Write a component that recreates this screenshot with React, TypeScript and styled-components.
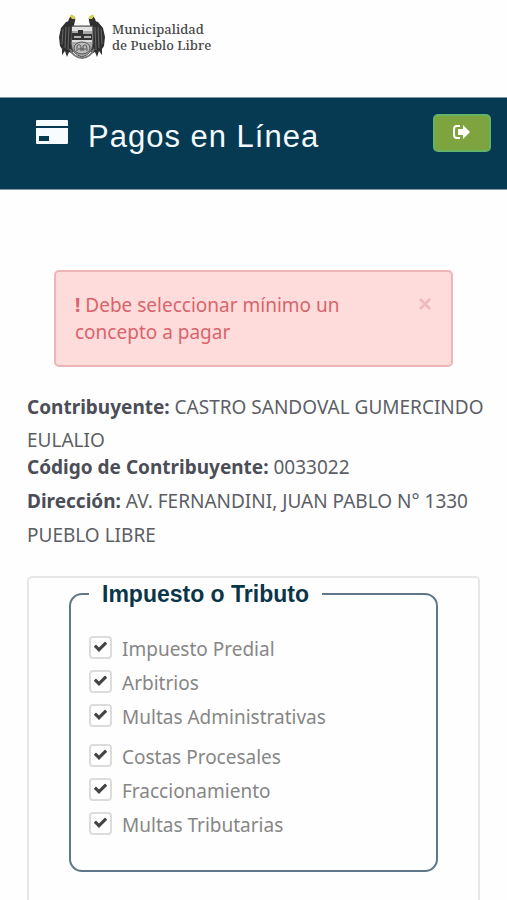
import React from "react";
import styled, { createGlobalStyle } from "styled-components";

const GlobalStyle = createGlobalStyle`
  * { box-sizing: border-box; }
  body {
    margin: 0;
    background: #fefefe;
    font-family: "Noto Sans", sans-serif;
    font-size: 19px;
    color: #5c5e66;
  }
  p, h1 { margin: 0; }
`;

const Masthead = styled.header`
  display: flex;
  align-items: flex-start;
  gap: 6px;
  height: 97px;
  padding: 12px 58px;
`;

const Crest = styled.svg`
  width: 48px;
  height: 48px;
  flex: none;
`;

const BrandName = styled.p`
  padding-top: 9px;
  font-family: "Noto Serif", "Liberation Serif", serif;
  font-size: 13px;
  font-weight: 500;
  line-height: 16px;
  color: #484848;
`;

const TitleBar = styled.div`
  display: flex;
  align-items: flex-start;
  height: 93px;
  padding: 16px 16px 0 36px;
  background: #063a52;
  border-top: 1px solid #8599a3;
  border-bottom: 1px solid #8599a3;
`;

const CardIcon = styled.svg`
  width: 32px;
  height: 24px;
  margin-top: 6px;
  flex: none;
`;

const Title = styled.h1`
  flex: 1;
  margin-left: 20px;
  font-family: "Liberation Sans", sans-serif;
  font-size: 31px;
  font-weight: 400;
  line-height: 46px;
  letter-spacing: 1px;
  color: #f4fbff;
`;

const ExitButton = styled.button`
  display: flex;
  align-items: center;
  justify-content: center;
  width: 58px;
  height: 38px;
  padding: 0 0 2px;
  border: 2px solid #65b267;
  border-radius: 5px;
  background: #7ea43f;
`;

const Alert = styled.div`
  display: flex;
  align-items: flex-start;
  justify-content: space-between;
  margin: 80px 54px 0;
  padding: 20px 20px 19px 19px;
  border: 2px solid #edb5b8;
  border-radius: 5px;
  background: #fddcdb;
  color: #d9646b;
  line-height: 27px;
`;

const AlertText = styled.p`
  max-width: 280px;
`;

const CloseButton = styled.button`
  display: flex;
  padding: 6px 0;
  border: 0;
  background: none;
`;

const Details = styled.section`
  padding: 24px 20px 0 27px;
`;

const Detail = styled.p<{ $tight?: boolean }>`
  line-height: ${(p) => (p.$tight ? 33 : 34)}px;
  margin-bottom: ${(p) => (p.$tight ? -7 : 0)}px;

  strong {
    color: #4b4d57;
  }
`;

const Panel = styled.form`
  margin: 24px 27px 0;
  padding: 2px 40px 60px;
  border: 2px solid #e6e6e8;
  border-radius: 5px;
`;

const TaxSet = styled.fieldset`
  margin: 0;
  min-width: 0;
  padding: 28px 18px 24px;
  border: 2px solid #5f7787;
  border-radius: 13px;
`;

const Legend = styled.legend`
  padding: 0 13px;
  font-family: "Liberation Sans", sans-serif;
  font-size: 23px;
  font-weight: 700;
  line-height: 28px;
  color: #0b3549;
`;

const Group = styled.div`
  & + & {
    margin-top: 6px;
  }
`;

const Option = styled.label`
  display: grid;
  grid-template-columns: 23px 1fr;
  column-gap: 10px;
  align-items: start;
  height: 34px;
  line-height: 27px;
  color: #868686;
`;

const Box = styled.input`
  grid-area: 1 / 1;
  appearance: none;
  width: 23px;
  height: 23px;
  margin: 0;
  border: 2px solid #dcdcdc;
  border-radius: 4px;
  background: #fff;

  &:not(:checked) + svg {
    visibility: hidden;
  }
`;

const Tick = styled.svg`
  grid-area: 1 / 1;
  width: 15px;
  height: 15px;
  margin: 3px 4px;
  pointer-events: none;
`;

const groups = [
  ["Impuesto Predial", "Arbitrios", "Multas Administrativas"],
  ["Costas Procesales", "Fraccionamiento", "Multas Tributarias"],
];

function Eagle() {
  return (
    <>
      <path d="M11 9 8 10 3 16 1 25 2 34 4 37 4 43 7 39 9 45 11 40 15 42 14 18 16 12Z" fill="#303030" />
      <path d="M5 17 4 32M8 15 7 36M11 15 10 38" stroke="#777" strokeWidth=".8" fill="none" />
      <path d="M10 10Q11 4 15 4Q18 5 17 9L15 17Z" fill="#303030" />
      <path d="M12 4Q13 1 16 4L18 7 14 7Z" fill="#d6cf4d" />
    </>
  );
}

export default function App() {
  return (
    <>
      <GlobalStyle />
      <Masthead>
        <Crest viewBox="0 0 48 48" aria-hidden="true">
          <Eagle />
          <g transform="translate(48 0) scale(-1 1)">
            <Eagle />
          </g>
          <path d="M14 14H35V32Q34 42 24 45Q14 42 13 32Z" fill="#aaa" stroke="#4a4a4a" />
          <path d="M14 15H34V19H14Z" fill="#e3e3e3" />
          <path d="M14 21H20V18H25V22H34V28H14Z" fill="#333" />
          <path d="M16 25H23M26 25H33" stroke="#ddd" strokeWidth="1.5" />
          <path d="M14 29H34" stroke="#eee" strokeWidth="1.5" />
          <ellipse cx="24" cy="36" rx="8" ry="6" fill="#bbb" stroke="#555" />
          <path d="M19 39V34Q22 31 23 35V39M25 39V34Q28 31 29 36V39M20 37H28" stroke="#555" fill="none" />
          <path d="M12 37Q15 45 24 46Q33 45 36 37" stroke="#777" strokeWidth="2" fill="none" />
        </Crest>
        <BrandName>
          Municipalidad
          <br />
          de Pueblo Libre
        </BrandName>
      </Masthead>

      <TitleBar>
        <CardIcon viewBox="0 0 32 24" aria-hidden="true">
          <path d="M1 0H31Q32 0 32 1V6H0V1Q0 0 1 0Z" fill="#f6fcff" />
          <path fillRule="evenodd" d="M0 8H32V23Q32 24 31 24H1Q0 24 0 23ZM3 16V21H13V16Z" fill="#f6fcff" />
        </CardIcon>
        <Title>Pagos en Línea</Title>
        <ExitButton type="button" aria-label="Salir">
          <svg width="18" height="16" viewBox="0 0 18 16" aria-hidden="true">
            <path d="M7 2H4Q1 2 1 5V11Q1 14 4 14H7" fill="none" stroke="#fff" strokeWidth="2" />
            <path d="M5 5H10V1L17 8 10 15V11H5Z" fill="#fff" />
          </svg>
        </ExitButton>
      </TitleBar>

      <main>
        <Alert role="alert">
          <AlertText>
            <strong>!</strong> Debe seleccionar mínimo un concepto a pagar
          </AlertText>
          <CloseButton type="button" aria-label="Cerrar">
            <svg width="12" height="12" viewBox="0 0 12 12" aria-hidden="true">
              <path d="M1 1 11 11M11 1 1 11" stroke="#eeb9bc" strokeWidth="2.5" />
            </svg>
          </CloseButton>
        </Alert>

        <Details>
          <Detail $tight>
            <strong>Contribuyente:</strong> CASTRO SANDOVAL GUMERCINDO EULALIO
          </Detail>
          <Detail>
            <strong>Código de Contribuyente:</strong> 0033022
          </Detail>
          <Detail>
            <strong>Dirección:</strong> AV. FERNANDINI, JUAN PABLO N° 1330 PUEBLO LIBRE
          </Detail>
        </Details>

        <Panel>
          <TaxSet>
            <Legend>Impuesto o Tributo</Legend>
            {groups.map((names) => (
              <Group key={names[0]}>
                {names.map((name) => (
                  <Option key={name}>
                    <Box type="checkbox" defaultChecked />
                    <Tick viewBox="0 0 1792 1792" aria-hidden="true">
                      <path
                        fill="#444"
                        d="M1671 566q0 40-28 68l-724 724-136 136q-28 28-68 28t-68-28l-136-136-362-362q-28-28-28-68t28-68l136-136q28-28 68-28t68 28l294 295 656-657q28-28 68-28t68 28l136 136q28 28 28 68z"
                      />
                    </Tick>
                    <span>{name}</span>
                  </Option>
                ))}
              </Group>
            ))}
          </TaxSet>
        </Panel>
      </main>
    </>
  );
}
